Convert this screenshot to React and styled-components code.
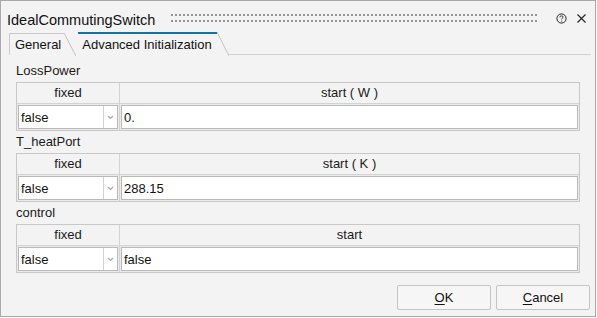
import React from 'react'
import styled, { createGlobalStyle } from 'styled-components'

const Global = createGlobalStyle`
  html, body { margin: 0; padding: 0; background: #ffffff; }
  body { font-family: "Liberation Sans", Arial, sans-serif; color: #1a1a1a; }
`

const Window = styled.div`
  width: 596px;
  height: 317px;
  box-sizing: border-box;
  border: 1px solid #a9a9a9;
  background: #f3f3f3;
  display: flex;
  flex-direction: column;
`

const TitleBar = styled.div`
  height: 30px;
  box-sizing: border-box;
  padding: 7px 8px 0 6px;
  display: flex;
  align-items: center;
  gap: 8px;
`

const Title = styled.div`
  font-size: 14.5px;
  color: #111;
  white-space: nowrap;
`

// two rows of small square dots, as in the drag handle
const Grip = styled.div`
  flex: 1;
  height: 8px;
  margin: -3px 8px 0 8px;
  background-image: radial-gradient(circle at 1px 1px, #959595 0.9px, transparent 1px);
  background-size: 4px 6px;
  background-position: 0 0;
`

const IconBtn = styled.span`
  display: flex;
  align-items: center;
  justify-content: center;
  width: 12px;
  height: 12px;
  margin-top: -3px;
`

const TabBar = styled.div`
  height: 24px;
  display: flex;
  align-items: flex-end;
  padding-left: 8px;
  margin-right: 4px;
`

const Tab = styled.div`
  position: relative;
  box-sizing: border-box;
  height: ${p => (p.$active ? '23px' : '22px')};
  padding: ${p => (p.$active ? '3px 5px 0 4px' : '3px 3px 0 5px')};
  margin-right: ${p => (p.$active ? '12px' : '14px')};
  font-size: 13px;
  line-height: 16px;
  color: #111;
  background: #f3f3f3;
  border-top: ${p => (p.$active ? '2px solid #0e73a6' : '1px solid #c9c9c9')};
  border-left: ${p => (p.$active ? 'none' : '1px solid #c9c9c9')};
  white-space: nowrap;

  &::after {
    content: '';
    position: absolute;
    top: ${p => (p.$active ? '-2px' : '-1px')};
    right: -12px;
    width: 12px;
    bottom: -1px;
    background: linear-gradient(to top right, #f3f3f3 calc(50% - 0.8px), #bdbdbd 50%, transparent calc(50% + 0.8px));
  }
`

const TabFill = styled.div`
  flex: 1;
  border-bottom: 1px solid #d2d2d2;
`

const Content = styled.div`
  padding: 5px 15px 0 15px;
  display: flex;
  flex-direction: column;
`

const Label = styled.div`
  height: 22px;
  line-height: 22px;
  font-size: 13px;
  color: #1a1a1a;
`

const Table = styled.div`
  display: grid;
  grid-template-columns: 102px 1fr;
  grid-template-rows: 20px 26px;
  gap: 1px;
  border: 1px solid #c8c8c8;
  background: #d3d3d3;
`

const HeadCell = styled.div`
  background: #f3f3f3;
  font-size: 13px;
  line-height: 20px;
  text-align: center;
  color: #1a1a1a;
`

const DataCell = styled.div`
  background: #ebebeb;
  padding: 1px;
  display: flex;
`

const Box = styled.div`
  flex: 1;
  display: flex;
  align-items: center;
  box-sizing: border-box;
  border: 1px solid #b9b9b9;
  background: #ffffff;
  font-size: 13px;
  color: #111;
`

const BoxText = styled.span`
  flex: 1;
  padding-left: 2px;
`

const Arrow = styled.span`
  width: 13px;
  align-self: stretch;
  border-left: 1px solid #cfcfcf;
  display: flex;
  align-items: center;
  justify-content: center;
`

const Footer = styled.div`
  margin-top: auto;
  display: flex;
  justify-content: flex-end;
  gap: 5px;
  padding: 0 5px 6px 0;
`

const Button = styled.button`
  width: 94px;
  height: 25px;
  box-sizing: border-box;
  border: 1px solid #c4c4c4;
  border-radius: 2px;
  background: #f6f6f6;
  font-family: "Liberation Sans", Arial, sans-serif;
  font-size: 13px;
  color: #111;
  padding: 0;
  u { text-decoration: underline; text-underline-offset: 2px; }
`

const Chevron = () => (
  <svg width="7" height="5" viewBox="0 0 7 5">
    <polyline points="1,1 3.5,3.5 6,1" fill="none" stroke="#a8a8a8" strokeWidth="1.2" />
  </svg>
)

const sections = [
  { name: 'LossPower', head: 'start ( W )', value: '0.' },
  { name: 'T_heatPort', head: 'start ( K )', value: '288.15' },
  { name: 'control', head: 'start', value: 'false' },
]

export default function App() {
  return (
    <>
      <Global />
      <Window>
        <TitleBar>
          <Title>IdealCommutingSwitch</Title>
          <Grip />
          <IconBtn>
            <svg width="11" height="11" viewBox="0 0 11 11">
              <circle cx="5.5" cy="5.5" r="4.6" fill="none" stroke="#222" strokeWidth="1" />
              <path d="M3.9 4.3 C3.9 3.3 4.6 2.9 5.5 2.9 C6.4 2.9 7.1 3.4 7.1 4.2 C7.1 5.1 5.6 5.3 5.6 6.4" fill="none" stroke="#222" strokeWidth="1" />
              <circle cx="5.6" cy="8" r="0.6" fill="#222" />
            </svg>
          </IconBtn>
          <IconBtn>
            <svg width="11" height="11" viewBox="0 0 11 11">
              <path d="M1.5 1.5 L9.5 9.5 M9.5 1.5 L1.5 9.5" stroke="#222" strokeWidth="1.1" />
            </svg>
          </IconBtn>
        </TitleBar>
        <TabBar>
          <Tab>General</Tab>
          <Tab $active>Advanced Initialization</Tab>
          <TabFill />
        </TabBar>
        <Content>
          {sections.map(s => (
            <div key={s.name}>
              <Label>{s.name}</Label>
              <Table>
                <HeadCell>fixed</HeadCell>
                <HeadCell>{s.head}</HeadCell>
                <DataCell>
                  <Box>
                    <BoxText>false</BoxText>
                    <Arrow><Chevron /></Arrow>
                  </Box>
                </DataCell>
                <DataCell>
                  <Box>
                    <BoxText>{s.value}</BoxText>
                  </Box>
                </DataCell>
              </Table>
            </div>
          ))}
        </Content>
        <Footer>
          <Button><u>O</u>K</Button>
          <Button><u>C</u>ancel</Button>
        </Footer>
      </Window>
    </>
  )
}
